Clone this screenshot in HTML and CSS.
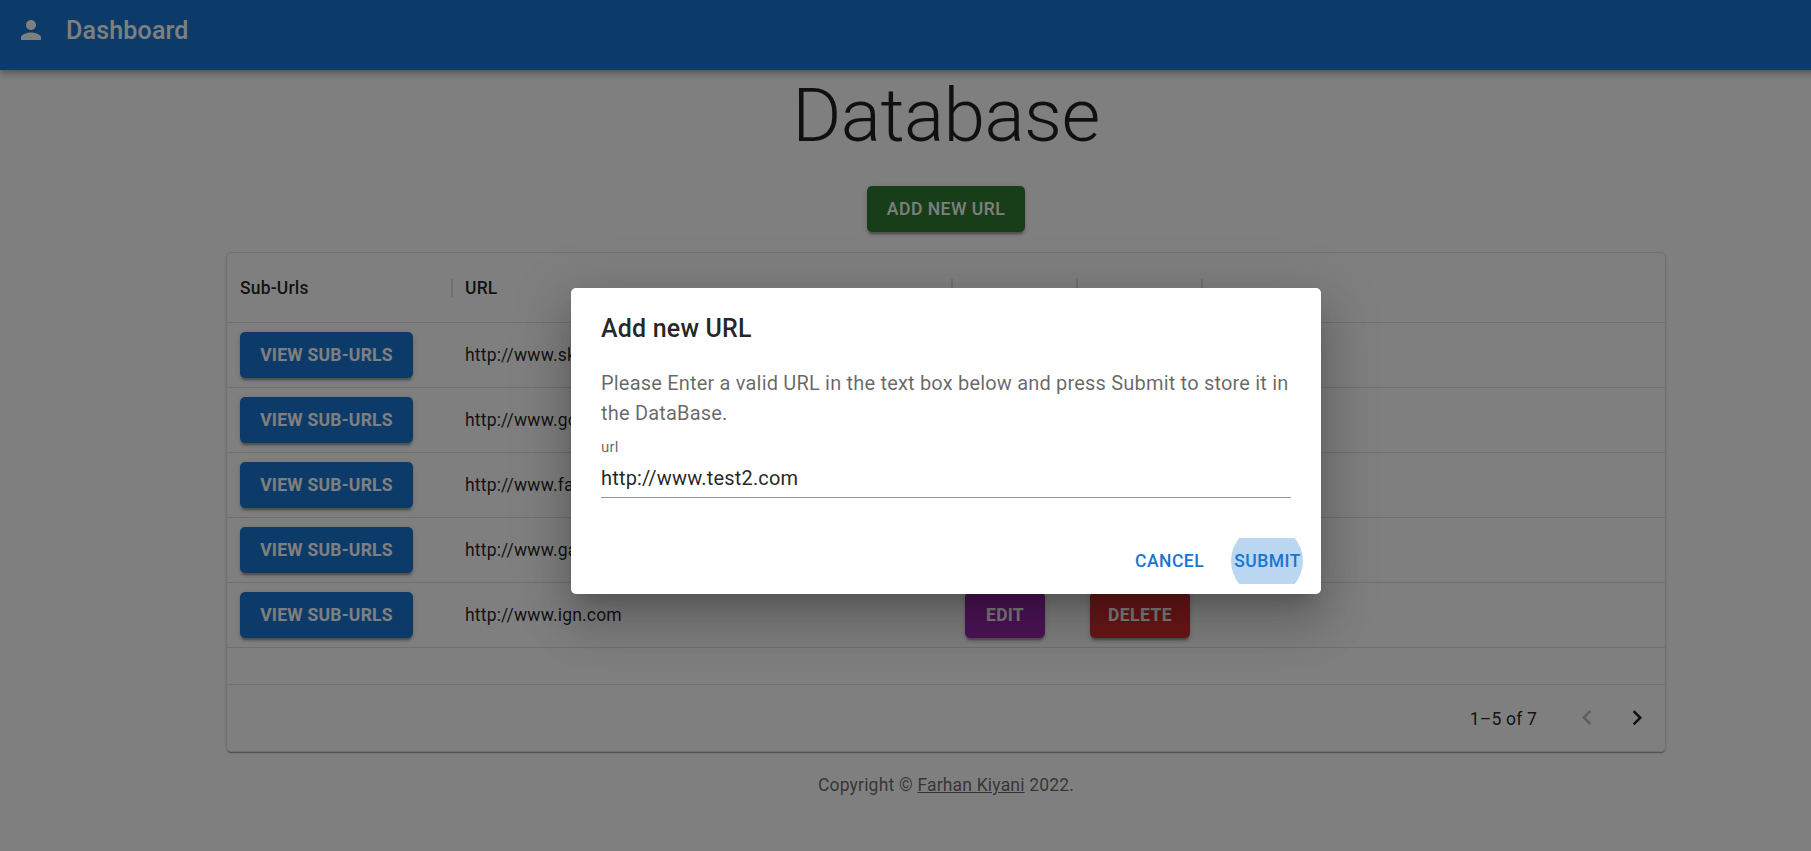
FILE: index.html
```html
<!DOCTYPE html>
<html lang="en">
<head>
<meta charset="utf-8">
<title>Dashboard</title>
<link rel="stylesheet" href="styles.css">
</head>
<body>
<div class="page">
  <header class="appbar">
    <svg class="icon" viewBox="0 0 24 24"><path d="M12 12c2.21 0 4-1.79 4-4s-1.79-4-4-4-4 1.79-4 4 1.79 4 4 4zm0 2c-2.67 0-8 1.34-8 4v2h16v-2c0-2.66-5.33-4-8-4z"/></svg>
    <span class="appbar-title">Dashboard</span>
  </header>
  <main class="content">
    <h1 class="heading">Database</h1>
    <button class="btn btn-success">Add new URL</button>
    <section class="grid">
      <div class="row row-head">
        <div class="cell">Sub-Urls</div><div class="cell">URL</div><div class="cell"></div><div class="cell"></div>
      </div>
      <div class="row"><div class="cell"><button class="btn btn-primary">View Sub-Urls</button></div><div class="cell">http://www.sky.com</div><div class="cell"><button class="btn btn-edit">Edit</button></div><div class="cell"><button class="btn btn-delete">Delete</button></div></div>
      <div class="row"><div class="cell"><button class="btn btn-primary">View Sub-Urls</button></div><div class="cell">http://www.google.com</div><div class="cell"><button class="btn btn-edit">Edit</button></div><div class="cell"><button class="btn btn-delete">Delete</button></div></div>
      <div class="row"><div class="cell"><button class="btn btn-primary">View Sub-Urls</button></div><div class="cell">http://www.facebook.com</div><div class="cell"><button class="btn btn-edit">Edit</button></div><div class="cell"><button class="btn btn-delete">Delete</button></div></div>
      <div class="row"><div class="cell"><button class="btn btn-primary">View Sub-Urls</button></div><div class="cell">http://www.game.com</div><div class="cell"><button class="btn btn-edit">Edit</button></div><div class="cell"><button class="btn btn-delete">Delete</button></div></div>
      <div class="row"><div class="cell"><button class="btn btn-primary">View Sub-Urls</button></div><div class="cell">http://www.ign.com</div><div class="cell"><button class="btn btn-edit">Edit</button></div><div class="cell"><button class="btn btn-delete">Delete</button></div></div>
      <div class="grid-footer">
        <span class="range">1–5 of 7</span>
        <svg class="icon pager pager-off" viewBox="0 0 24 24"><path d="M15.41 16.09l-4.58-4.59 4.58-4.59L14 5.5l-6 6 6 6z"/></svg>
        <svg class="icon pager" viewBox="0 0 24 24"><path d="M8.59 16.34l4.58-4.59-4.58-4.59L10 5.75l6 6-6 6z"/></svg>
      </div>
    </section>
    <p class="copyright">Copyright © <a class="link" href="#">Farhan Kiyani</a> 2022.</p>
  </main>
  <div class="backdrop">
    <div class="dialog">
      <h2 class="dialog-title">Add new URL</h2>
      <div class="dialog-body">
        <p class="dialog-text">Please Enter a valid URL in the text box below and press Submit to store it in the DataBase.</p>
        <div class="field">
          <div class="field-label">url</div>
          <div class="field-input">http://www.test2.com</div>
        </div>
      </div>
      <div class="dialog-actions">
        <button class="btn btn-text">Cancel</button>
        <button class="btn btn-text"><span class="ripple"></span>Submit</button>
      </div>
    </div>
  </div>
</div>
</body>
</html>
```
FILE: styles.css
```css
* { box-sizing: border-box; }
html { overflow: hidden; }
body {
  margin: 0;
  height: 851px;
  overflow: hidden;
  background: #fff;
  color: rgba(0, 0, 0, .87);
  font-family: Roboto, "Liberation Sans", sans-serif;
}
.page { position: relative; width: 1892px; height: 882px; }
.icon { width: 30px; height: 30px; fill: currentColor; flex: none; }

.appbar {
  display: flex;
  align-items: center;
  gap: 20px;
  height: 70px;
  padding: 0 16px 10px;
  background: #1976d2;
  color: #fff;
  box-shadow: 0 2.5px 5px -1.25px rgba(0, 0, 0, .2), 0 5px 6.25px rgba(0, 0, 0, .14), 0 1.25px 12.5px rgba(0, 0, 0, .12);
}
.appbar-title { padding-top: 2px; font-size: 25px; line-height: 40px; font-weight: 500; letter-spacing: .0075em; }

.content { display: flex; flex-direction: column; align-items: center; }
.heading {
  margin: 0 0 26px;
  font-size: 75px;
  line-height: 90px;
  font-weight: 300;
  letter-spacing: -.00833em;
}
.btn {
  position: relative;
  overflow: hidden;
  min-width: 80px;
  height: 46px;
  padding: 0 20px;
  border: 0;
  border-radius: 5px;
  background: none;
  color: #fff;
  font: 500 17.5px/30.6px Roboto, "Liberation Sans", sans-serif;
  letter-spacing: .02857em;
  text-transform: uppercase;
  white-space: nowrap;
  box-shadow: 0 3.75px 1.25px -2.5px rgba(0, 0, 0, .2), 0 2.5px 2.5px rgba(0, 0, 0, .14), 0 1.25px 6.25px rgba(0, 0, 0, .12);
}
.btn-success { background: #2e7d32; }
.row .btn { font-weight: 700; letter-spacing: .0143em; }
.btn-primary { background: #1976d2; width: 173px; }
.btn-edit { background: #9c27b0; }
.row .btn-delete { background: #d32f2f; width: 100px; padding: 0; letter-spacing: .025em; }
.btn-text { color: #1976d2; padding: 0 10px; box-shadow: none; }

.grid {
  display: flex;
  flex-direction: column;
  width: 1440px;
  height: 500px;
  margin-top: 20px;
  border: 1px solid #e0e0e0;
  border-radius: 5px;
  font-size: 17.5px;
  letter-spacing: .01071em;
  box-shadow: 0 2px 1px -1px rgba(0, 0, 0, .2), 0 1px 1px rgba(0, 0, 0, .14), 0 1px 3px rgba(0, 0, 0, .12);
}
.row {
  display: grid;
  grid-template-columns: 225px 500px 125px 125px;
  height: 65px;
  border-bottom: 1px solid #e0e0e0;
}
.row-head { height: 70px; font-weight: 500; }
.cell { position: relative; display: flex; align-items: center; padding-left: 13px; }
.row-head .cell::after {
  content: "";
  position: absolute;
  right: -1px;
  top: 26px;
  width: 2px;
  height: 18px;
  background: #e0e0e0;
}
.grid-footer {
  display: flex;
  align-items: center;
  justify-content: flex-end;
  height: 67px;
  margin-top: auto;
  padding-right: 13px;
  border-top: 1px solid #e0e0e0;
}
.range { margin-right: 35px; padding-top: 2px; }
.pager { margin-left: 20px; }
.pager-off { margin-left: 0; color: rgba(0, 0, 0, .26); }

.copyright {
  margin: 21px 0 0;
  color: rgba(0, 0, 0, .6);
  font-size: 17.5px;
  line-height: 25px;
  letter-spacing: .01071em;
}
.link { color: inherit; }

.backdrop {
  position: absolute;
  inset: 0;
  display: flex;
  align-items: center;
  justify-content: center;
  background: rgba(0, 0, 0, .5);
}
.dialog {
  width: 750px;
  border-radius: 5px;
  background: #fff;
  box-shadow: 0 13.75px 18.75px -8.75px rgba(0, 0, 0, .2), 0 30px 47.5px 3.75px rgba(0, 0, 0, .14), 0 11.25px 57.5px 10px rgba(0, 0, 0, .12);
}
.dialog-title { margin: 0; padding: 21px 30px 19px; font-size: 25px; line-height: 40px; font-weight: 500; letter-spacing: .0075em; }
.dialog-body { padding: 0 30px 25px; }
.dialog-text { margin: 0; font-size: 20px; line-height: 30px; letter-spacing: .00938em; color: rgba(0, 0, 0, .6); }
.field { margin: 10px 0 5px; height: 60px; }
.field-label { height: 20px; font-size: 15px; line-height: 18px; letter-spacing: .00938em; color: rgba(0, 0, 0, .6); }
.field-input {
  height: 40px;
  padding: 6px 0 5px;
  border-bottom: 1px solid #949494;
  font-size: 20px;
  line-height: 28px;
  letter-spacing: .00938em;
}
.dialog-actions { display: flex; justify-content: flex-end; gap: 10px; padding: 10px; }
.ripple {
  position: absolute;
  left: 50%;
  top: 50%;
  width: 72px;
  height: 72px;
  margin: -36px 0 0 -36.5px;
  border-radius: 50%;
  background: rgba(25, 118, 210, .3);
}
```
